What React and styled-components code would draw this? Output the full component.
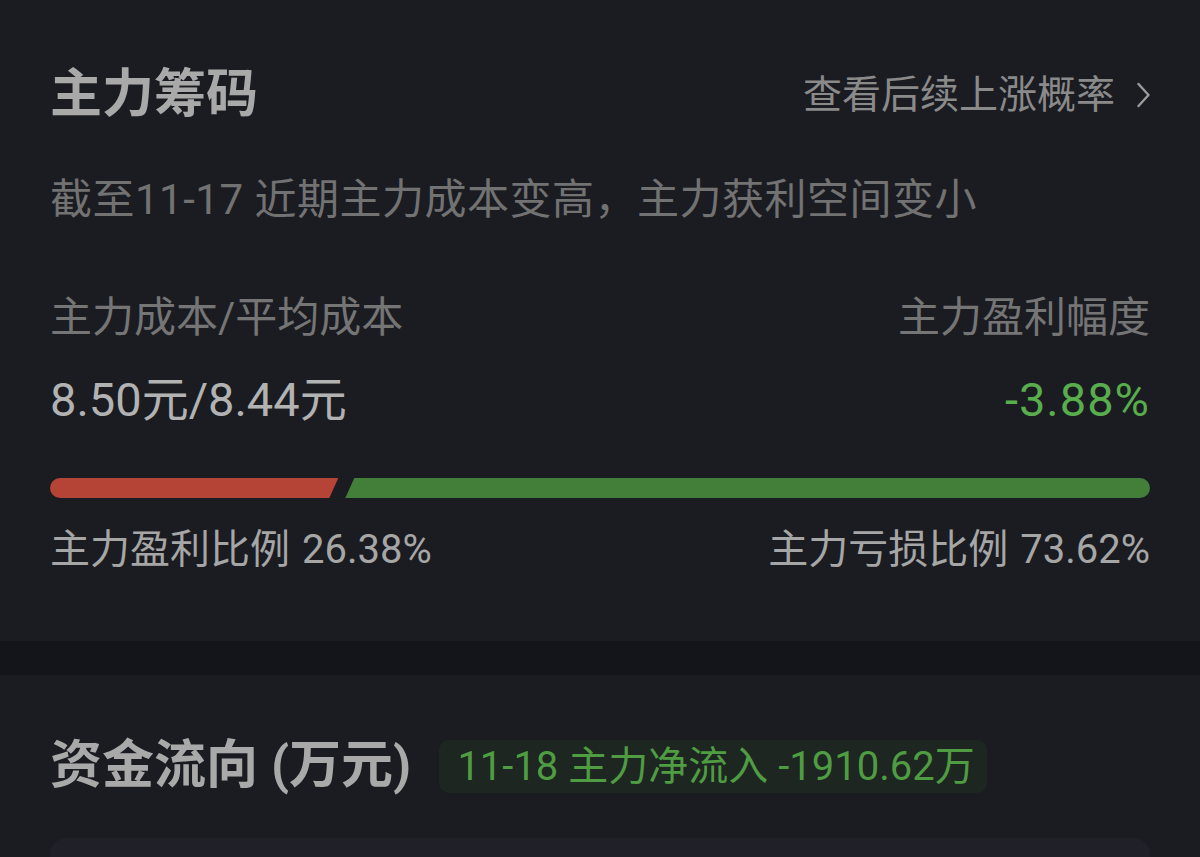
import React from 'react';
import styled, { createGlobalStyle } from 'styled-components';

const GlobalStyle = createGlobalStyle`
  html, body {
    margin: 0;
    padding: 0;
    background: #14151b;
  }
  body {
    font-family: Roboto, "Noto Sans CJK SC", "Noto Sans", sans-serif;
  }
`

const Page = styled.div`
  width: 1200px;
  height: 857px;
  overflow: hidden;
  background: #14151b;
`

const Card = styled.section`
  background: #1b1c22;
  padding: ${p => p.$pad};
  margin-bottom: ${p => p.$gapBelow || 0}px;
`

const HeaderRow = styled.div`
  display: flex;
  align-items: center;
  justify-content: space-between;
  height: 62px;
`

const Title = styled.h2`
  margin: 0;
  font-size: 52px;
  line-height: 62px;
  font-weight: 700;
  color: #a9a9a9;
`

const MoreLink = styled.a`
  display: flex;
  align-items: center;
  gap: 22px;
  font-size: 39px;
  line-height: 50px;
  color: #8a8a8a;
  cursor: pointer;
`

const Subtitle = styled.p`
  margin: 49px 0 0;
  font-size: 42px;
  line-height: 50px;
  letter-spacing: 0.5px;
  color: #727272;
`

const SplitRow = styled.div`
  display: flex;
  justify-content: space-between;
  align-items: center;
  margin-top: ${p => p.$top}px;
`

const Label = styled.span`
  font-size: 42px;
  line-height: 50px;
  color: #757575;
`

const Value = styled.span`
  font-size: 47px;
  line-height: 56px;
  letter-spacing: ${p => (p.$down ? '1px' : '0')};
  color: ${p => (p.$down ? '#58ad4c' : '#b2b2b2')};
`

const Bar = styled.div`
  display: flex;
  gap: 7px;
  height: 20px;
  margin-top: 50px;
`

const UpPart = styled.div`
  flex: ${p => p.$share};
  background: #b54436;
  border-radius: 10px 0 0 10px;
  clip-path: polygon(0 0, 100% 0, calc(100% - 9px) 100%, 0 100%);
`

const DownPart = styled.div`
  flex: ${p => p.$share};
  background: #437f38;
  border-radius: 0 10px 10px 0;
  clip-path: polygon(9px 0, 100% 0, 100% 100%, 0 100%);
`

const Ratio = styled.span`
  display: flex;
  gap: 12px;
  font-size: 40px;
  line-height: 50px;
  color: #a6a6a6;
`

const FlowHeader = styled.div`
  display: flex;
  align-items: center;
  gap: 28px;
  height: 62px;
`

const Badge = styled.span`
  display: inline-flex;
  align-items: center;
  height: 53px;
  padding: 0 12px 0 18px;
  border-radius: 10px;
  background: #1d2620;
  color: #4f9c43;
  font-size: 40px;
  line-height: 53px;
`

const ChartBox = styled.div`
  margin-top: 41px;
  height: 120px;
  border-radius: 16px;
  background: #1f2028;
`

const chips = { up: 26.38, down: 73.62 };

export default function App() {
  return (
    <Page>
      <GlobalStyle />
      <Card $pad="64px 50px 66px" $gapBelow={34}>
        <HeaderRow>
          <Title>主力筹码</Title>
          <MoreLink>
            查看后续上涨概率
            <svg width="13" height="26" viewBox="0 0 13 26" fill="none">
              <polyline points="1.5,2 11.5,13 1.5,24" stroke="#9a9a9a" strokeWidth="2.4" strokeLinecap="round" strokeLinejoin="round" />
            </svg>
          </MoreLink>
        </HeaderRow>
        <Subtitle>截至11-17 近期主力成本变高，主力获利空间变小</Subtitle>
        <SplitRow $top={68}>
          <Label>主力成本/平均成本</Label>
          <Label>主力盈利幅度</Label>
        </SplitRow>
        <SplitRow $top={29}>
          <Value>8.50元/8.44元</Value>
          <Value $down>-3.88%</Value>
        </SplitRow>
        <Bar>
          <UpPart $share={chips.up} />
          <DownPart $share={chips.down} />
        </Bar>
        <SplitRow $top={27}>
          <Ratio><span>主力盈利比例</span><span>{chips.up}%</span></Ratio>
          <Ratio><span>主力亏损比例</span><span>{chips.down}%</span></Ratio>
        </SplitRow>
      </Card>
      <Card $pad="60px 50px 0">
        <FlowHeader>
          <Title>资金流向 (万元)</Title>
          <Badge>11-18 主力净流入 -1910.62万</Badge>
        </FlowHeader>
        <ChartBox />
      </Card>
    </Page>
  );
}
